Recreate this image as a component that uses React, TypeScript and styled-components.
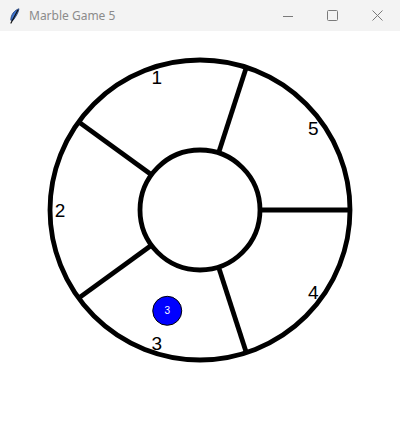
import React from 'react';
import styled, { createGlobalStyle } from 'styled-components';

const GlobalStyle = createGlobalStyle`
  html, body {
    margin: 0;
    padding: 0;
    background: #ffffff;
  }
`;

const Window = styled.div`
  width: 400px;
  height: 432px;
  display: flex;
  flex-direction: column;
  background: #ffffff;
  overflow: hidden;
`;

const TitleBar = styled.div`
  height: 31px;
  flex: 0 0 31px;
  display: flex;
  align-items: center;
  background: #f3f3f3;
  font-family: 'Noto Sans', 'Open Sans', sans-serif;
`;

const AppIcon = styled.div`
  width: 16px;
  height: 16px;
  margin-left: 6px;
  margin-right: 7px;
  display: flex;
  align-items: center;
  justify-content: center;
`;

const Title = styled.span`
  font-size: 12px;
  color: #8b8b8b;
  flex: 1;
  margin-top: -1px;
`;

const Controls = styled.div`
  display: flex;
  height: 100%;
`;

const ControlButton = styled.div`
  width: 45px;
  height: 100%;
  display: flex;
  align-items: center;
  justify-content: center;
`;

const Canvas = styled.svg`
  display: block;
  flex: 1;
  width: 400px;
`;

const CX = 200;
const CY = 179;
const OUTER = 150;
const INNER = 60;
const LABEL_R = 140;
const STROKE = 4.8;

const spokeAngles = [0, 72, 144, 216, 288];

const sectors = [
  { label: '5', angle: 36 },
  { label: '1', angle: 108 },
  { label: '2', angle: 180 },
  { label: '3', angle: 252 },
  { label: '4', angle: 324 },
];

const marbles = [{ sector: 3, angle: 252, r: 106 }];

const polar = (angle: number, r: number) => {
  const rad = (angle * Math.PI) / 180;
  return { x: CX + r * Math.cos(rad), y: CY - r * Math.sin(rad) };
};

const Feather = () => (
  <svg width="12" height="16" viewBox="0 0 12 16">
    <path d="M11 0.8 C6.5 2.2 2.8 6.5 2.8 12.2 L5 12.4 C7.6 9 10.3 5 11 0.8 Z" fill="#3e74cf" stroke="#1a3870" strokeWidth="0.8" />
    <path d="M9.8 2.3 L3 15" stroke="#111" strokeWidth="1.2" strokeLinecap="round" />
  </svg>
);

const App: React.FC = () => {
  return (
    <>
      <GlobalStyle />
      <Window>
        <TitleBar>
          <AppIcon>
            <Feather />
          </AppIcon>
          <Title>Marble Game 5</Title>
          <Controls>
            <ControlButton>
              <svg width="10" height="10" viewBox="0 0 10 10">
                <path d="M0 5.5 H10" stroke="#7a7a7a" strokeWidth="1" />
              </svg>
            </ControlButton>
            <ControlButton>
              <svg width="11" height="11" viewBox="0 0 11 11">
                <rect x="0.5" y="0.5" width="10" height="10" rx="1" fill="none" stroke="#7a7a7a" strokeWidth="1" />
              </svg>
            </ControlButton>
            <ControlButton>
              <svg width="11" height="11" viewBox="0 0 11 11">
                <path d="M0.5 0.5 L10.5 10.5 M10.5 0.5 L0.5 10.5" stroke="#7a7a7a" strokeWidth="1" />
              </svg>
            </ControlButton>
          </Controls>
        </TitleBar>
        <Canvas viewBox="0 0 400 401">
          <circle cx={CX} cy={CY} r={OUTER} fill="none" stroke="#000" strokeWidth={STROKE} />
          <circle cx={CX} cy={CY} r={INNER} fill="none" stroke="#000" strokeWidth={STROKE} />
          {spokeAngles.map((a) => {
            const p1 = polar(a, INNER);
            const p2 = polar(a, OUTER);
            return <line key={a} x1={p1.x} y1={p1.y} x2={p2.x} y2={p2.y} stroke="#000" strokeWidth={STROKE} />;
          })}
          {sectors.map((s) => {
            const p = polar(s.angle, LABEL_R);
            return (
              <text
                key={s.label}
                x={p.x}
                y={p.y + 7}
                textAnchor="middle"
                fontFamily="'Liberation Sans', Arial, sans-serif"
                fontSize="19"
                fill="#000"
              >
                {s.label}
              </text>
            );
          })}
          {marbles.map((m) => {
            const p = polar(m.angle, m.r);
            return (
              <g key={m.sector}>
                <circle cx={p.x} cy={p.y} r={14.5} fill="#0000ff" stroke="#000" strokeWidth="1" />
                <text
                  x={p.x}
                  y={p.y + 3.5}
                  textAnchor="middle"
                  fontFamily="'Liberation Sans', Arial, sans-serif"
                  fontSize="10"
                  fill="#ffffff"
                >
                  {m.sector}
                </text>
              </g>
            );
          })}
        </Canvas>
      </Window>
    </>
  );
};

export default App;
